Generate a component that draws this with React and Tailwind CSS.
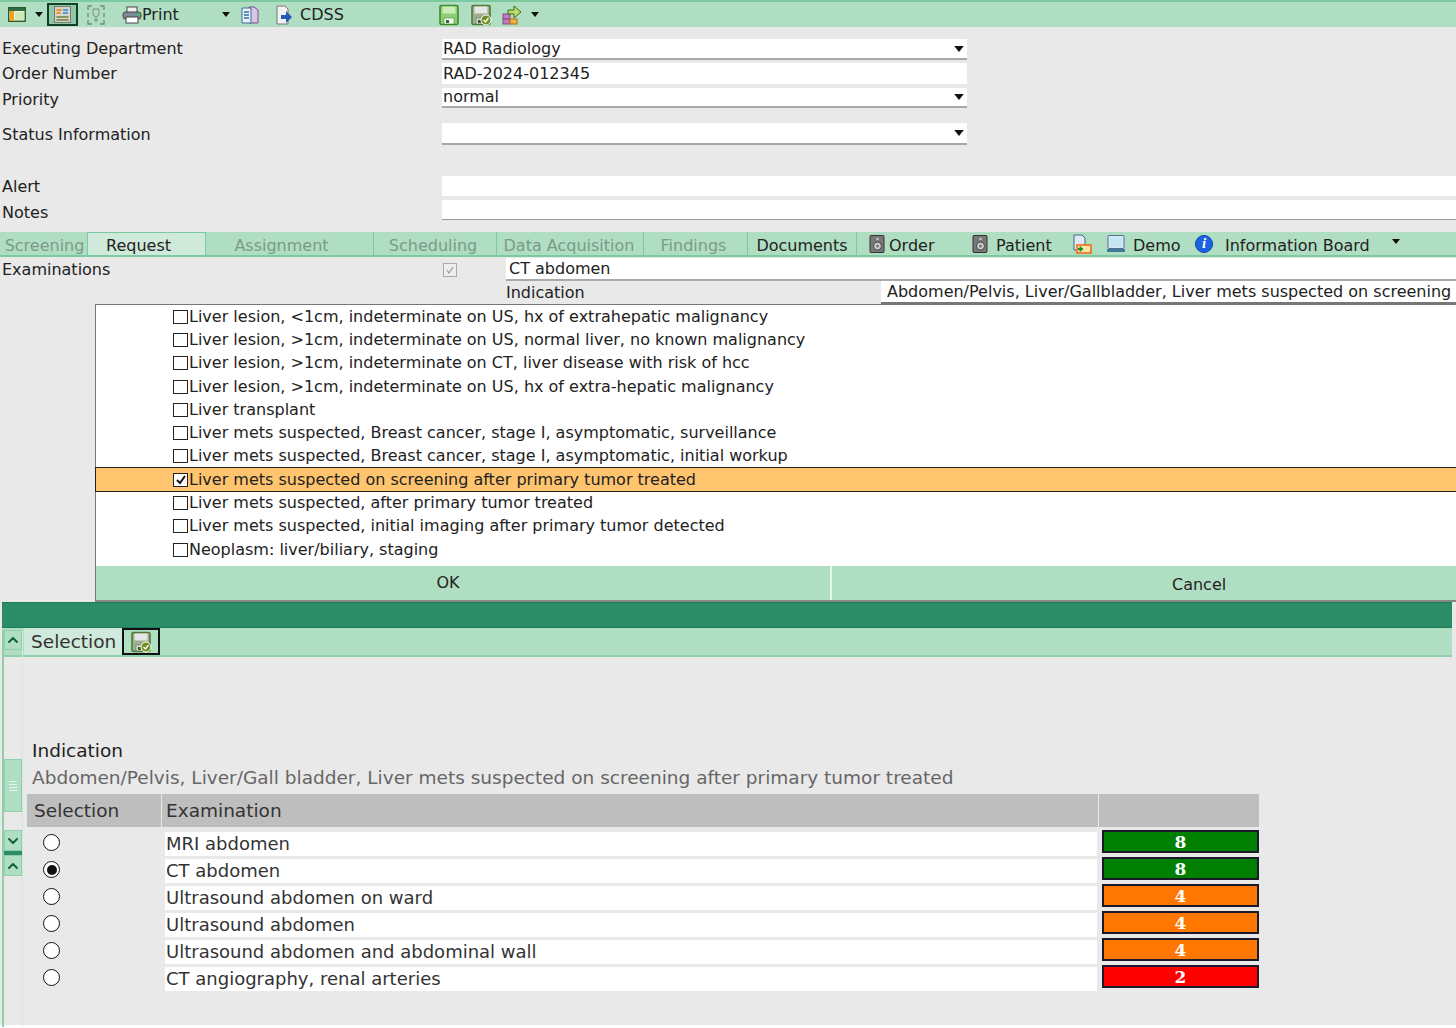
import { ChevronDown, ChevronUp } from "lucide-react";

const FONT = "font-['DejaVu_Sans',sans-serif]";

const INDICATIONS = [
  "Liver lesion, <1cm, indeterminate on US, hx of extrahepatic malignancy",
  "Liver lesion, >1cm, indeterminate on US, normal liver, no known malignancy",
  "Liver lesion, >1cm, indeterminate on CT, liver disease with risk of hcc",
  "Liver lesion, >1cm, indeterminate on US, hx of extra-hepatic malignancy",
  "Liver transplant",
  "Liver mets suspected, Breast cancer, stage I, asymptomatic, surveillance",
  "Liver mets suspected, Breast cancer, stage I, asymptomatic, initial workup",
  "Liver mets suspected on screening after primary tumor treated",
  "Liver mets suspected, after primary tumor treated",
  "Liver mets suspected, initial imaging after primary tumor detected",
  "Neoplasm: liver/biliary, staging",
];

const EXAMS = [
  { name: "MRI abdomen", score: 8, tone: "bg-[#008000]" },
  { name: "CT abdomen", score: 8, tone: "bg-[#008000]", selected: true },
  { name: "Ultrasound abdomen on ward", score: 4, tone: "bg-[#ff7700]" },
  { name: "Ultrasound abdomen", score: 4, tone: "bg-[#ff7700]" },
  { name: "Ultrasound abdomen and abdominal wall", score: 4, tone: "bg-[#ff7700]" },
  { name: "CT angiography, renal arteries", score: 2, tone: "bg-[#ff0000]" },
];

const TABS = [
  { label: "Screening", cls: "w-[86px] justify-center" },
  { label: "Request", cls: "w-[118px] justify-start pl-[18px]", active: true },
  { label: "Assignment", cls: "w-[168px] justify-center pr-[16px]" },
  { label: "Scheduling", cls: "w-[123px] justify-center pr-[4px]" },
  { label: "Data Acquisition", cls: "w-[147px] justify-center pr-[2px]" },
  { label: "Findings", cls: "w-[104px] justify-center pr-[4px]" },
];

function Caret({ className = "" }) {
  return (
    <svg width="8" height="5" viewBox="0 0 8 5" className={className}>
      <path d="M0 0h8L4 5z" fill="#111" />
    </svg>
  );
}

function Disk({ check }) {
  return (
    <svg width="22" height="22" viewBox="0 0 22 22">
      <rect x="2" y="1.5" width="18" height="19" rx="1.5" fill={check ? "#9fb08e" : "#8fce78"} stroke={check ? "#4f7a35" : "#3f8a2a"} strokeWidth="1.6" />
      <rect x="4.5" y="2.5" width="13" height="7" fill={check ? "#e6e6e6" : "#c9ecb8"} />
      <rect x="6" y="14" width="10" height="6" fill={check ? "#d6d6d6" : "#f7f7f7"} stroke={check ? "#666" : "#3f8a2a"} strokeWidth="0.6" />
      <rect x="8" y="16" width="3" height="3" fill="#2f6b1e" />
      {check && <circle cx="16" cy="16" r="5" fill="#6f8f1f" stroke="#fff" />}
      {check && <path d="M13.5 16l2 2 3-4" fill="none" stroke="#fff" strokeWidth="1.4" />}
    </svg>
  );
}

function Speaker() {
  return (
    <svg width="16" height="18" viewBox="0 0 16 18">
      <rect x="1" y="0.5" width="14" height="17" rx="1" fill="#77787a" stroke="#333" />
      <circle cx="8.5" cy="4" r="1.2" fill="#ccc" />
      <circle cx="8.5" cy="11" r="4" fill="#cfcfcf" stroke="#444" />
      <circle cx="8.5" cy="11" r="1.6" fill="#777" />
    </svg>
  );
}

function Select({ value }) {
  return (
    <div className="flex h-full w-[525px] items-center justify-between border-b-2 border-b-[#a8a8a8] bg-white pl-[1px] pr-[2px]">
      <span>{value}</span>
      <Caret className="h-[6px] w-[12px]" />
    </div>
  );
}

function FormRow({ label, className, labelClass = "", children }) {
  return (
    <div className={`flex items-center ${className}`}>
      <span className={`w-[442px] shrink-0 pl-[2px] ${labelClass}`}>{label}</span>
      {children}
    </div>
  );
}

function Toolbar() {
  return (
    <div className="flex h-[27px] items-center border-t-2 border-t-[#7ccba0] bg-[#b0dec3] pl-[8px]">
      <svg width="18" height="15" viewBox="0 0 18 15">
        <rect x="0.7" y="0.7" width="16.6" height="13.6" fill="#e9f3df" stroke="#2f5a2a" strokeWidth="1.4" />
        <rect x="1" y="1" width="16" height="3" fill="#2f6a3a" />
        <rect x="2" y="4" width="4" height="10" fill="#f2a11d" />
        <rect x="7" y="5" width="9" height="8" fill="#cfe8b8" />
      </svg>
      <Caret className="ml-[9px]" />
      <div className="ml-[4px] flex h-[23px] w-[31px] items-center justify-center border-2 border-[#12402a] bg-[#8fc9a6]">
        <svg width="17" height="17" viewBox="0 0 17 17">
          <rect x="0.5" y="0.5" width="16" height="16" fill="#d9d3c8" stroke="#777" />
          <path d="M2.5 4h5M2.5 7h4" stroke="#f0932b" strokeWidth="2" />
          <path d="M9 4h5M9 7h5" stroke="#4f9bd9" strokeWidth="2" />
          <path d="M2.5 11h12M2.5 14h12" stroke="#6d7f3a" strokeWidth="1.5" />
        </svg>
      </div>
      <svg width="18" height="20" viewBox="0 0 18 20" className="ml-[9px]">
        <path d="M1 5V1h4M13 1h4v4M17 15v4h-4M5 19H1v-4M1 8v4M17 8v4" fill="none" stroke="#7a8a80" strokeWidth="1.4" />
        <path d="M6 4h6v5l-2 3H8L6 9zM8 14h2v2H8z" fill="none" stroke="#7a8a80" />
      </svg>
      <svg width="20" height="18" viewBox="0 0 20 18" className="ml-[17px]">
        <rect x="5" y="1" width="10" height="6" fill="#eee" stroke="#444" />
        <rect x="1" y="6" width="18" height="7" rx="2.5" fill="#7f8a99" stroke="#444" />
        <rect x="4" y="11" width="12" height="6" fill="#fff" stroke="#444" />
        <circle cx="16.5" cy="8.5" r="1.2" fill="#19d64a" />
      </svg>
      <span className="w-[80px]">Print</span>
      <Caret />
      <svg width="18" height="20" viewBox="0 0 18 20" className="ml-[11px]">
        <path d="M8 2h5l4 3v13H8z" fill="#d8c6e6" stroke="#7a4f96" />
        <path d="M1 3h9v15H1z" fill="#e8f1f8" stroke="#3d6f96" />
        <path d="M3 7h5M3 10h5M3 13h5" stroke="#2f6fa8" strokeWidth="1.4" />
      </svg>
      <svg width="18" height="20" viewBox="0 0 18 20" className="ml-[16px]">
        <path d="M2 1h8l3 3v15H2z" fill="#f2f2f2" stroke="#777" />
        <path d="M6 10h5V6l6 6-6 6v-4H6z" fill="#2458b5" />
      </svg>
      <span className="ml-[7px] w-[138px]">CDSS</span>
      <Disk />
      <span className="ml-[10px] flex"><Disk check /></span>
      <svg width="20" height="20" viewBox="0 0 20 20" className="ml-[10px]">
        <rect x="1" y="9" width="7" height="5" fill="#c77ab0" stroke="#7a4f96" />
        <rect x="1" y="14" width="7" height="5" fill="#c77ab0" stroke="#7a4f96" />
        <rect x="8" y="14" width="7" height="5" fill="#f0b23c" stroke="#a8701a" />
        <path d="M6 5h6V1l7 6-7 6V9H6z" fill="#b9dc6a" stroke="#3c6a22" />
      </svg>
      <Caret className="ml-[9px]" />
    </div>
  );
}

function TabBar() {
  return (
    <div className="mt-[12px] flex h-[25px] items-stretch border-b-2 border-b-[#7ccba0] bg-[#b0dec3] pl-[2px]">
      {TABS.map((tab) => (
        <div
          key={tab.label}
          className={`flex items-center border-r border-r-[#7ccba0] pt-[4px] ${tab.cls} ${
            tab.active ? "border-t border-t-[#7ccba0] bg-[#cfe9da] text-[#222]" : "text-[#7c9a89]"
          }`}
        >
          {tab.label}
        </div>
      ))}
      <div className="flex w-[109px] items-center justify-center border-r border-r-[#7ccba0] pt-[4px]">Documents</div>
      <span className="ml-[12px] flex items-center"><Speaker /></span>
      <span className="ml-[4px] flex w-[83px] items-center pt-[4px]">Order</span>
      <span className="flex items-center"><Speaker /></span>
      <span className="ml-[8px] flex w-[76px] items-center pt-[4px]">Patient</span>
      <svg width="20" height="20" viewBox="0 0 20 20" className="self-center">
        <path d="M2 1h8l3 3v12H2z" fill="#dfe9f3" stroke="#4c6480" />
        <rect x="5" y="11" width="14" height="8" fill="#f5e6a8" stroke="#ef6c1a" strokeWidth="1.6" />
        <path d="M6 15h5M8.5 12.5v5" stroke="#1f8a2c" strokeWidth="2" />
      </svg>
      <svg width="20" height="18" viewBox="0 0 20 18" className="ml-[14px] self-center">
        <rect x="2" y="0.5" width="16" height="13" rx="1" fill="#d8e8f8" stroke="#55708f" />
        <rect x="4" y="2.5" width="12" height="9" fill="#c4e6ee" />
        <rect x="1" y="14" width="18" height="3" fill="#3f7a98" />
      </svg>
      <span className="ml-[7px] flex w-[62px] items-center pt-[4px]">Demo</span>
      <span className="flex h-[18px] w-[18px] items-center justify-center self-center rounded-full border border-[#1040b0] bg-[#1c62e0] font-['Liberation_Serif',serif] text-[15px] font-bold italic text-white">i</span>
      <span className="ml-[12px] flex w-[167px] items-center pt-[4px]">Information Board</span>
      <Caret className="mb-[4px] self-center" />
    </div>
  );
}

function IndicationDialog() {
  return (
    <div className="ml-[95px] border-l border-t border-b-2 border-l-[#777] border-t-[#777] border-b-[#888] bg-white">
      <div className="flex h-[261px] flex-col">
        {INDICATIONS.map((item, i) => {
          const selected = i === 7;
          return (
            <div
              key={item}
              className={`flex h-[23.3px] shrink-0 items-center pl-[77px] ${selected ? "outline outline-1 outline-[#222] bg-[#ffc46e]" : ""}`}
            >
              <span className="mr-[1px] flex h-[14px] w-[15px] items-center justify-center border border-[#222] bg-white">
                {selected && (
                  <svg width="12" height="12" viewBox="0 0 12 12">
                    <path d="M2 6l3 3 5-7" fill="none" stroke="#111" strokeWidth="2" />
                  </svg>
                )}
              </span>
              {item}
            </div>
          );
        })}
      </div>
      <div className="flex h-[34px] bg-[#b0dec3]">
        <div className="flex w-[736px] items-center justify-center border-r-2 border-r-[#e8f5ee] pb-[1px] pr-[30px]">OK</div>
        <div className="flex flex-1 items-end pb-[3px] pl-[340px]">Cancel</div>
      </div>
    </div>
  );
}

function ScrollRail() {
  const btn = "flex w-[18px] items-center justify-center bg-[#b0dec3] border border-[#8fd0ab] text-[#11633c]";
  return (
    <div className="flex h-[397px] w-[21px] shrink-0 flex-col border-l-2 border-r border-l-[#8fd0ab] border-r-[#cfe9da]">
      <div className={`${btn} h-[20px]`}><ChevronUp size={16} strokeWidth={3} /></div>
      <div className={`${btn} mt-[109px] h-[53px] flex-col gap-[2px]`}>
        <span className="h-[1px] w-[8px] bg-[#e8f5ee]" />
        <span className="h-[1px] w-[8px] bg-[#e8f5ee]" />
        <span className="h-[1px] w-[8px] bg-[#e8f5ee]" />
        <span className="h-[1px] w-[8px] bg-[#e8f5ee]" />
      </div>
      <div className={`${btn} mt-[18px] h-[21px]`}><ChevronDown size={16} strokeWidth={3} /></div>
      <div className="h-[4px] w-[18px] bg-[#2a8d68]" />
      <div className={`${btn} h-[21px]`}><ChevronUp size={16} strokeWidth={3} /></div>
    </div>
  );
}

function Recommendations() {
  return (
    <div className="ml-[4px] w-[1232px] pt-[108px] text-[18.5px]">
      <div className="pl-[5px] leading-[26px] text-[#222]">Indication</div>
      <div className="pl-[5px] leading-[28px] text-[#666]">Abdomen/Pelvis, Liver/Gall bladder, Liver mets suspected on screening after primary tumor treated</div>
      <div className="mt-[2px] grid h-[33px] grid-cols-[134px_936px_160px] gap-x-[1px] text-[#333]">
        <div className="flex items-center bg-[#bebebe] pl-[7px]">Selection</div>
        <div className="flex items-center bg-[#bebebe] pl-[4px]">Examination</div>
        <div className="bg-[#bebebe]" />
      </div>
      <div className="mt-[5px] flex flex-col gap-[3px]">
        {EXAMS.map((exam) => (
          <div key={exam.name} className="grid h-[24px] grid-cols-[138px_932px_162px] grid-rows-[24px] items-stretch leading-[24px]">
            <div className="flex items-center pb-[3px] pl-[16px]">
              <span className="flex h-[17px] w-[17px] items-center justify-center rounded-full border-[1.5px] border-[#111] bg-white">
                {exam.selected && <span className="h-[10px] w-[10px] rounded-full bg-[#111]" />}
              </span>
            </div>
            <div className="flex items-center bg-white pl-[1px] text-[18px] text-[#333]">{exam.name}</div>
            <div className={`-mt-[2px] ml-[5px] flex h-[23px] items-center justify-center border-2 border-[#1a1a2a] font-['DejaVu_Serif',serif] text-[17px] font-bold text-white ${exam.tone}`}>
              {exam.score}
            </div>
          </div>
        ))}
      </div>
    </div>
  );
}

export default function App() {
  return (
    <div className={`${FONT} h-[1028px] overflow-hidden bg-white text-[16px] text-[#222]`}>
      <div className="h-[1025px] bg-[#e9e9e9]">
        <Toolbar />
        <div className="mt-[12px]">
          <FormRow label="Executing Department" className="h-[21px]" labelClass="-mt-[2px]"><Select value="RAD Radiology" /></FormRow>
          <FormRow label="Order Number" className="mt-[3px] h-[21px]">
            <div className="flex h-full w-[525px] items-center bg-white pl-[1px]">RAD-2024-012345</div>
          </FormRow>
          <FormRow label="Priority" className="mt-[4px] h-[20px]" labelClass="pt-[3px]"><Select value="normal" /></FormRow>
          <FormRow label="Status Information" className="mt-[15px] h-[22px]" labelClass="pt-[1px]"><Select value="" /></FormRow>
          <FormRow label="Alert" className="mt-[31px] h-[20px]" labelClass="pt-[1px]"><div className="h-full flex-1 bg-white" /></FormRow>
          <FormRow label="Notes" className="mt-[4px] h-[20px]" labelClass="pt-[5px]">
            <div className="h-full flex-1 border-b border-b-[#999] bg-white" />
          </FormRow>
        </div>
        <TabBar />
        <div className="mt-[1px] flex h-[23px] items-center">
          <span className="w-[443px] shrink-0 pl-[2px]">Examinations</span>
          <span className="flex h-[14px] w-[14px] items-center justify-center border border-[#aaa] bg-[#eee]">
            <svg width="10" height="10" viewBox="0 0 10 10"><path d="M2 5l2 3 4-6" fill="none" stroke="#999" strokeWidth="1.2" /></svg>
          </span>
          <div className="ml-[49px] flex h-full flex-1 items-center border-b-2 border-b-[#aaa] bg-white pl-[3px]">CT abdomen</div>
        </div>
        <div className="flex h-[23px] items-center">
          <span className="ml-[506px] w-[375px]">Indication</span>
          <div className="flex h-full flex-1 items-center overflow-hidden whitespace-nowrap border-b-2 border-b-[#777] bg-white pl-[6px]">
            Abdomen/Pelvis, Liver/Gallbladder, Liver mets suspected on screening
          </div>
        </div>
        <IndicationDialog />
        <div className="ml-[2px] mr-[4px] h-[26px] border-t border-b border-t-[#1f7a58] border-b-[#1f7a58] bg-[#2a8d68]" />
        <div className="ml-[2px] mr-[4px] flex h-[29px] items-stretch border-b-2 border-b-[#8fd0ab] bg-[#b0dec3] pl-[22px]">
          <div className="flex w-[98px] items-center bg-[#cfe9da] pl-[7px] text-[18.5px] text-[#333]">Selection</div>
          <div className="flex w-[38px] items-center justify-center border-2 border-[#111]"><Disk check /></div>
        </div>
        <div className="-mt-[27px] ml-[2px] flex">
          <ScrollRail />
          <Recommendations />
        </div>
      </div>
    </div>
  );
}
